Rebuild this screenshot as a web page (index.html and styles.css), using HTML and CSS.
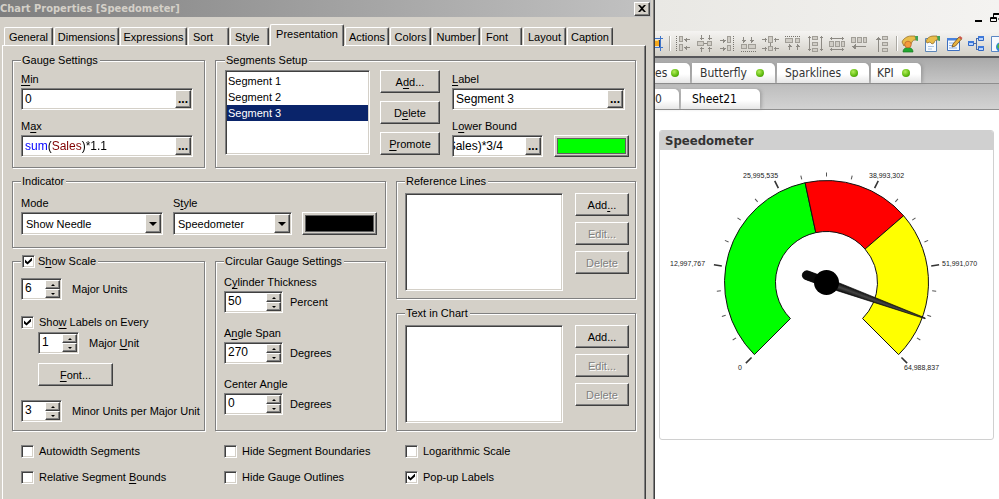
FILE: index.html
```html
<!DOCTYPE html>
<html lang="en">
<head>
<meta charset="utf-8">
<title>Chart Properties [Speedometer]</title>
<link rel="stylesheet" href="styles.css">
</head>
<body>
<div class="desktop">
<section class="dialog" aria-labelledby="dlg-title">
  <header class="titlebar">
    <h1 id="dlg-title">Chart Properties [Speedometer]</h1>
    <button class="close" aria-label="Close"><svg width="8" height="7" viewBox="0 0 8 7"><path d="M0 0h2l2 2 2-2h2L5 3.500 8 7H6L4 5 2 7H0l3-3.500z"/></svg></button>
  </header>
  <nav class="tabs" role="tablist">
    <button role="tab">General</button>
    <button role="tab">Dimensions</button>
    <button role="tab">Expressions</button>
    <button role="tab" class="left">Sort</button>
    <button role="tab" class="left">Style</button>
    <button role="tab" class="active" aria-selected="true">Presentation</button>
    <button role="tab">Actions</button>
    <button role="tab">Colors</button>
    <button role="tab">Number</button>
    <button role="tab" class="left">Font</button>
    <button role="tab">Layout</button>
    <button role="tab">Caption</button>
  </nav>
  <div class="page" role="tabpanel">
    <div class="top-row">
      <fieldset class="gauge">
        <legend>Gauge Settings</legend>
        <div class="field"><label for="min"><u>M</u>in</label>
          <div class="box"><input id="min" value="0"><button class="more" aria-label="Edit minimum">...</button></div></div>
        <div class="field"><label for="max">M<u>a</u>x</label>
          <div class="box"><input id="max" class="expr" value="sum(Sales)*1.1"><button class="more" aria-label="Edit maximum">...</button></div></div>
      </fieldset>
      <fieldset class="segments">
        <legend>Segments Setup</legend>
        <select class="list" size="5" aria-label="Segments">
          <option>Segment 1</option><option>Segment 2</option><option selected>Segment 3</option>
        </select>
        <div class="stack wide-gap">
          <button class="btn">A<u>d</u>d...</button>
          <button class="btn">D<u>e</u>lete</button>
          <button class="btn"><u>P</u>romote</button>
        </div>
        <div class="segment-fields">
          <div class="field"><label for="seg"><u>L</u>abel</label>
            <div class="box label-box"><input id="seg" value="Segment 3"><button class="more" aria-label="Edit label">...</button></div></div>
          <div class="field"><label for="bound">L<u>o</u>wer Bound</label>
            <div class="bound-row">
              <div class="box"><input id="bound" class="scrolled" value="sum(Sales)*3/4"><button class="more" aria-label="Edit bound">...</button></div>
              <button class="swatch" aria-label="Segment color"><span class="lime"></span></button>
            </div></div>
        </div>
      </fieldset>
    </div>

    <div class="lower">
      <div class="lower-left">
        <fieldset class="indicator">
          <legend>Indicator</legend>
          <div class="field"><label for="mode">Mode</label>
            <div class="combo"><select id="mode"><option>Show Needle</option></select><span class="drop"></span></div></div>
          <div class="field"><label for="style">S<u>t</u>yle</label>
            <div class="combo"><select id="style"><option>Speedometer</option></select><span class="drop"></span></div></div>
          <button class="swatch" aria-label="Needle color"><span class="black"></span></button>
        </fieldset>
        <div class="pair">
          <fieldset class="scale">
            <legend class="check"><input type="checkbox" id="scale" checked><label for="scale">S<u>h</u>ow Scale</label></legend>
            <div class="unit"><div class="spin"><input id="major" value="6"><span class="arrows"><button aria-label="Up"></button><button class="down" aria-label="Down"></button></span></div><label for="major">Major Units</label></div>
            <div class="check labels-on"><input type="checkbox" id="every" checked><label for="every">Sho<u>w</u> Labels on Every</label></div>
            <div class="unit indent"><div class="spin"><input id="nth" value="1"><span class="arrows"><button aria-label="Up"></button><button class="down" aria-label="Down"></button></span></div><label for="nth">Major <u>U</u>nit</label></div>
            <button class="btn font indent"><u>F</u>ont...</button>
            <div class="unit"><div class="spin"><input id="minor" value="3"><span class="arrows"><button aria-label="Up"></button><button class="down" aria-label="Down"></button></span></div><label for="minor">Minor Units per Major Unit</label></div>
          </fieldset>
          <fieldset class="circular">
            <legend>Circular Gauge Settings</legend>
            <div class="field"><label for="thick">C<u>y</u>linder Thickness</label>
              <div class="unit"><div class="spin"><input id="thick" value="50"><span class="arrows"><button aria-label="Up"></button><button class="down" aria-label="Down"></button></span></div><span>Percent</span></div></div>
            <div class="field"><label for="span">A<u>n</u>gle Span</label>
              <div class="unit"><div class="spin"><input id="span" value="270"><span class="arrows"><button aria-label="Up"></button><button class="down" aria-label="Down"></button></span></div><span>Degrees</span></div></div>
            <div class="field"><label for="center">Center Angle</label>
              <div class="unit"><div class="spin"><input id="center" value="0"><span class="arrows"><button aria-label="Up"></button><button class="down" aria-label="Down"></button></span></div><span>Degrees</span></div></div>
          </fieldset>
        </div>
      </div>
      <div class="lower-right">
        <fieldset class="lines">
          <legend>Reference Lines</legend>
          <select class="list" size="6" aria-label="Reference lines"></select>
          <div class="stack"><button class="btn">Add<u>.</u>..</button><button class="btn" disabled>Edit...</button><button class="btn" disabled>Delete</button></div>
        </fieldset>
        <fieldset class="lines">
          <legend>Text in Chart</legend>
          <select class="list" size="6" aria-label="Texts in chart"></select>
          <div class="stack"><button class="btn">Add...</button><button class="btn" disabled>Edit...</button><button class="btn" disabled>Delete</button></div>
        </fieldset>
      </div>
    </div>

    <div class="options">
      <div class="check"><input type="checkbox" id="o1"><label for="o1">Autowidth Segments</label></div>
      <div class="check"><input type="checkbox" id="o2"><label for="o2">Hide Segment Boundaries</label></div>
      <div class="check"><input type="checkbox" id="o3"><label for="o3">Logarithmic Scale</label></div>
      <div class="check"><input type="checkbox" id="o4"><label for="o4">Relative Segment <u>B</u>ounds</label></div>
      <div class="check"><input type="checkbox" id="o5"><label for="o5">Hide Gauge Outlines</label></div>
      <div class="check"><input type="checkbox" id="o6" checked><label for="o6">Pop-up Labels</label></div>
    </div>
  </div>
</section>

<main class="app">
  <div class="window-bar">
    <button aria-label="Minimize"><svg width="7" height="10" viewBox="0 0 7 10"><path d="M0 7h7v2H0z"/></svg></button>
    <button aria-label="Restore"><svg width="10" height="10" viewBox="0 0 10 10" fill="none" stroke="#000"><path d="M3.500 4V.500h7V6H8M3 1.500h8M.500 4.500h6v4h-6zM0 5.500h7"/></svg></button>
  </div>
  <div class="toolbar">
    <svg width="8" height="18" viewBox="0 0 8 18" shape-rendering="crispEdges"><path d="M0 5h4v6H0z" fill="#f5a81c"/><path d="M0 5h3v1H0z" fill="#fbe08a"/><path d="M5 1v15M0 3.500h8M0 12.500h8" stroke="#3f74c8" fill="none"/><path d="M4 5v7" stroke="#223a70"/></svg>
    <span class="sep"></span>
    <svg class="al" viewBox="0 0 18 18"><path class="dots" d="M2.500 1v16"/><path class="b" d="M5.500 1.500h3v5h-3zM5.500 9.500h3v6h-3z"/><path class="a" d="M10 4.500h6M12.500 2.500v4M11.500 3.500v2M10 12.500h6M12.500 10.500v4M11.500 11.500v2"/></svg>
    <svg class="al" viewBox="0 0 18 18"><path class="b" d="M1.500 6.500h6v4h-6zM11.500 6.500h4v4h-4z"/><path class="a" d="M5.500 0v5M3.500 3.500h4M13.500 0v5M11.500 3.500h4M5.500 12v5M3.500 13.500h4M13.500 12v5M11.500 13.500h4M8 8.500h3"/></svg>
    <svg class="al" viewBox="0 0 18 18"><path class="dots" d="M15.500 1v16"/><path class="b" d="M9.500 1.500h3v6h-3zM9.500 10.500h3v5h-3z"/><path class="a" d="M2 5.500h6M5.500 3.500v4M6.500 4.500v2M2 13.500h6M5.500 11.500v4M6.500 12.500v2"/></svg>
    <svg class="al" viewBox="0 0 18 18"><path class="dots" d="M1 16.500h16"/><path class="b" d="M1.500 9.500h5v4h-5zM8.500 9.500h7v4h-7z"/><path class="a" d="M3.500 2v6M1.500 5.500h4M2.500 6.500h2M11.500 2v6M9.500 5.500h4M10.500 6.500h2"/></svg>
    <svg class="al" viewBox="0 0 18 18"><path class="b" d="M6.500 1.500h4v6h-4zM6.500 11.500h4v4h-4z"/><path class="a" d="M0 4.500h5M3.500 2.500v4M12 4.500h5M13.500 2.500v4M0 13.500h5M3.500 11.500v4M12 13.500h5M13.500 11.500v4M8.500 8v3"/></svg>
    <svg class="al" viewBox="0 0 18 18"><path class="dots" d="M1 1.500h16"/><path class="b" d="M1.500 3.500h7v4h-7zM11.500 3.500h4v4h-4z"/><path class="a" d="M5.500 9v6M3.500 11.500h4M4.500 10.500h2M13.500 9v6M11.500 11.500h4M12.500 10.500h2"/></svg>
    <svg class="al" viewBox="0 0 18 18"><path class="b" d="M6.500 1.500h5v3h-5zM6.500 7.500h5v3h-5zM6.500 13.500h5v3h-5z"/><path class="a" d="M3.500 1v15M2 2.500h3M2 14.500h3M15.500 1v15M14 2.500h3M14 14.500h3"/></svg>
    <svg class="al" viewBox="0 0 18 18"><path class="b" d="M1.500 6.500h4v5h-4zM7.500 6.500h4v5h-4zM13.500 6.500h3v5h-3z"/><path class="a" d="M2 3.500h14M3.500 2v3M14.500 2v3M2 14.500h14M3.500 13v3M14.500 13v3"/></svg>
    <svg class="al" viewBox="0 0 18 18"><path class="b" d="M1.500 2.500h4v5h-4zM7.500 2.500h4v5h-4zM13.500 2.500h3v5h-3z"/><path class="a" d="M2 11.500h14M4.500 9.500v4M3.500 10.500v2M5.500 9v5"/></svg>
    <svg class="al" viewBox="0 0 18 18"><path class="b" d="M10.500 1.500h5v3h-5zM10.500 7.500h5v3h-5zM10.500 13.500h5v3h-5z"/><path class="a" d="M6.500 2v15M4 4.500h5M5 3.500h3"/></svg>
    <span class="sep"></span>
    <svg class="ic" viewBox="0 0 18 18"><path d="M2 17c0-3 2-4.500 5-4.500s5 1.500 5 4.500z" fill="#22a830" stroke="#157a20" stroke-width=".7"/><path d="M1 7c1-3 5-6 9-6h4l1 4c-2 0-3 0-4 2l-1 2-2-2-3 1-2 3z" fill="#e9bd4a" stroke="#8b6420" stroke-width=".7"/><circle cx="7" cy="9.500" r="3.300" fill="#f49a3c" stroke="#b8602a" stroke-width=".7"/><path d="M14 1h3v5l-2-.5z" fill="#3fa356"/></svg>
    <svg class="ic" viewBox="0 0 18 18"><path d="M2.500 3.500h11v13h-11z" fill="#f7fbff" stroke="#5c86b8"/><path d="M5 11.500h6M5 14h4" stroke="#a9c4e4"/><path d="M3 6c1-3 4-5 7-5h4l1 4c-2 0-3 0-4 3l-2 1-2-2-3 1z" fill="#e9bd4a" stroke="#8b6420" stroke-width=".7"/><path d="M14 1h3v5l-2-.5z" fill="#3fa356"/></svg>
    <svg class="ic" viewBox="0 0 18 18"><path d="M2.500 3.500h12v12h-12z" fill="#f4f9ff" stroke="#3d6fc0"/><path d="M2 3h13v2.500H2z" fill="#4a82dc"/><path d="M4 8h5M4 10.500h4M4 13h8" stroke="#8db2e6"/><path d="M7 12l1-3 6-7 2.500 2-6 7z" fill="#e6b23e" stroke="#6f4a1c" stroke-width=".8"/><path d="M13.500 2.500L15 1l2.500 2-1.200 1.500z" fill="#cc5548"/></svg>
    <svg class="ic" viewBox="0 0 18 18"><path d="M6 8.500h3M9.500 3.500v11M9 3.500h2M9 14.500h2" stroke="#4a6ca8" fill="none"/><path d="M1.500 6.500h5v4h-5zM11.500 1.500h5v4h-5zM11.500 11.500h5v4h-5z" fill="#b8d4ff" stroke="#3268c4"/><path d="M1 6h6v2H1zM11 1h6v2h-6zM11 11h6v2h-6z" fill="#3f79da"/></svg>
    <svg class="ic" viewBox="0 0 18 18"><path d="M2.500 1.500h8l4 4v11h-12z" fill="#f6faff" stroke="#5a86c4"/><circle cx="12" cy="12" r="5" fill="#2f86d8"/><path d="M9 9l3-1 1 3-3 3-2-2z" fill="#4bb64b"/></svg>
  </div>
  <nav class="sheets">
    <a href="#a" class="cut">es<i></i></a><a href="#b" class="s83">Butterfly<i></i></a><a href="#c" class="s92">Sparklines<i></i></a><a href="#d" class="s50">KPI<i></i></a>
  </nav>
  <nav class="sheets second">
    <a href="#e" class="cut0">0</a><a href="#f" class="s79">Sheet21</a>
  </nav>
  <section class="panel">
    <h2>Speedometer</h2>
    <svg class="dial" viewBox="660 150 333 289" role="img" aria-label="Speedometer gauge">
      <defs><linearGradient id="nd" x1="0" y1="0" x2="0" y2="1"><stop offset="0" stop-color="#000"/><stop offset=".5" stop-color="#444"/><stop offset="1" stop-color="#000"/></linearGradient></defs>
      <g transform="translate(826.500 282.500)">
        <g stroke="#111" stroke-width="1">
          <path fill="#0f0" d="M-72.120 72.120A102 102 0 0 1 -21.380 -99.740L-10.690 -49.870A51 51 0 0 0 -36.060 36.060Z"/>
          <path fill="#f00" d="M-21.380 -99.740A102 102 0 0 1 77.100 -66.780L38.550 -33.390A51 51 0 0 0 -10.690 -49.870Z"/>
          <path fill="#ff0" d="M77.100 -66.780A102 102 0 0 1 72.120 72.120L36.060 36.060A51 51 0 0 0 38.550 -33.390Z"/>
        </g>
        <g stroke="#333" stroke-width="1.600">
          <path d="M0-106v-8" transform="rotate(-135)"/><path d="M0-106v-8" transform="rotate(-81)"/><path d="M0-106v-8" transform="rotate(-27)"/><path d="M0-106v-8" transform="rotate(27)"/><path d="M0-106v-8" transform="rotate(81)"/><path d="M0-106v-8" transform="rotate(135)"/>
        </g>
        <g stroke="#555" stroke-width="1">
          <path d="M0-106v-4" transform="rotate(-121.500)"/><path d="M0-106v-4" transform="rotate(-108)"/><path d="M0-106v-4" transform="rotate(-94.500)"/><path d="M0-106v-4" transform="rotate(-67.500)"/><path d="M0-106v-4" transform="rotate(-54)"/><path d="M0-106v-4" transform="rotate(-40.500)"/><path d="M0-106v-4" transform="rotate(-13.500)"/><path d="M0-106v-4"/><path d="M0-106v-4" transform="rotate(13.500)"/><path d="M0-106v-4" transform="rotate(40.500)"/><path d="M0-106v-4" transform="rotate(54)"/><path d="M0-106v-4" transform="rotate(67.500)"/><path d="M0-106v-4" transform="rotate(94.500)"/><path d="M0-106v-4" transform="rotate(108)"/><path d="M0-106v-4" transform="rotate(121.500)"/>
        </g>
        <g transform="rotate(20.300)">
          <path fill="url(#nd)" stroke="#000" stroke-width=".6" d="M-21-4.500A4.500 4.500 0 0 0-21 4.500L0 4.500 12 4 105-.2V-1L12-4 0-4.500Z"/>
          <path fill="#0a0a0a" d="M-21-4.500A4.500 4.500 0 0 0-21 4.500L0 4V-4Z"/>
        </g>
        <circle r="12.500"/>
      </g>
      <g class="nums">
        <text x="743" y="178">25,995,535</text><text x="869" y="178">38,993,302</text>
        <text x="670" y="266">12,997,767</text><text x="942" y="266">51,991,070</text>
        <text x="738" y="370">0</text><text x="904" y="370">64,988,837</text>
      </g>
    </svg>
  </section>
</main>
</div>
</body>
</html>
```
FILE: styles.css
```css
* { box-sizing: border-box; }
body { margin: 0; background: #fff; font: 11px/16px "Liberation Sans", Arial, sans-serif; color: #000; }
button, input, select { font: inherit; color: inherit; margin: 0; }
button { cursor: default; }
label { white-space: nowrap; }
u { text-underline-offset: 2px; }

.desktop { display: grid; grid-template-columns: minmax(0, 655fr) minmax(0, 344fr); min-height: 100vh; overflow: hidden; }

/* dialog frame */
.dialog { background: #d4d0c8; border-right: 1px solid #404040; box-shadow: inset -1px 0 #808080; display: flex; flex-direction: column; }
.titlebar { display: flex; justify-content: space-between; align-items: center; height: 17px; padding-right: 1px; background: linear-gradient(90deg, #7f7f7f, #c2c2c2); margin-right: 3px; }
.titlebar h1 { margin: 0; font: bold 11px/16px "DejaVu Sans Condensed", "DejaVu Sans", sans-serif; color: #d4d0c8; }
.close { width: 16px; height: 14px; padding: 0; display: grid; place-items: center; }

.btn, .close, .more, .drop, .arrows button {
  background: #d4d0c8; border: 1px solid; border-color: #fff #404040 #404040 #fff;
  box-shadow: inset -1px -1px #808080; border-radius: 0;
}
.btn { height: 23px; padding: 0; text-align: center; }
.btn:disabled { color: #808080; text-shadow: 1px 1px #fff; }

/* tab strip */
.tabs { display: grid; grid-template-columns: 49fr 65fr 67fr 41fr 39fr 74fr 44fr 41fr 48fr 41fr 43fr 46fr; column-gap: 1px; align-items: end; margin: 7px 41px 0 4px; height: 21px; position: relative; }
.tabs button { height: 18px; padding: 0 1px; background: #d4d0c8; border: 1px solid; border-color: #fff #404040 transparent #fff; border-bottom: 0; border-radius: 2px 2px 0 0; box-shadow: inset -1px 0 #808080; white-space: nowrap; }
.tabs .left { text-align: left; padding-left: 4px; }
.tabs .active { height: 22px; margin-bottom: -1px; padding-bottom: 4px; }

.page { flex: 1; margin: 0 8px 0 2px; padding: 7px 9px 14px; border: solid; border-width: 1px 1px 0; border-color: #fff #404040 #fff #fff; box-shadow: inset -1px 0 #808080; }

/* group boxes */
fieldset { margin: 0; min-width: 0; border: 1px solid #808080; box-shadow: 1px 1px #fff, inset 1px 1px #fff; padding: 4px 11px 10px 8px; }
legend { height: 14px; line-height: 14px; padding: 0 2px 0 1px; background: #d4d0c8; }
.top-row { display: grid; grid-template-columns: 193fr 421fr; gap: 10px; }
.lower { display: grid; grid-template-columns: 374fr 240fr; gap: 10px; margin-top: 6px; }
.lower-left, .lower-right { display: flex; flex-direction: column; }
.lower-left { gap: 6px; }
.lower-right { gap: 7px; }
.pair { display: grid; grid-template-columns: 193fr 171fr; gap: 10px; flex: 1; }

.field { display: flex; flex-direction: column; gap: 1px; min-width: 0; }
.field + .field { margin-top: 8px; }

/* sunken boxes */
.box, .spin, .list, .combo { background: #fff; border: 1px solid; border-color: #808080 #fff #fff #808080; box-shadow: inset 1px 1px #404040, inset -1px -1px #d4d0c8; border-radius: 0; }
.box { display: flex; height: 22px; padding: 1px; font: 12px/18px "Liberation Sans", Arial, sans-serif; min-width: 0; }
.box input { flex: 1; width: 0; min-width: 0; border: 0; outline: 0; padding: 0 0 1px 2px; background: transparent; }
.box .expr { color: transparent; background: linear-gradient(90deg, #00f 25px, #000 25px, #000 29px, #800000 29px, #800000 59px, #000 59px); -webkit-background-clip: text; background-clip: text; }
.box .scrolled { text-indent: -33px; padding-left: 0; }
.more { width: 16px; padding: 0; font-weight: bold; line-height: 12px; }
.label-box { margin-right: 4px; }

.segments { display: grid; grid-template-columns: 145fr 60fr 179fr; column-gap: 10px; padding: 3px 6px 10px 9px; }
.segment-fields { padding: 1px 0 0 2px; }
.list { appearance: none; display: block; width: 100%; height: 85px; padding: 2px 1px 1px; margin: 0; overflow: hidden; outline: 0; }
.list option { padding: 2px 1px 0; min-height: 16px; line-height: 14px; }
.list option:checked { background: linear-gradient(#0a246a, #0a246a); -webkit-text-fill-color: #fff; }
.stack { display: flex; flex-direction: column; gap: 6px; }
.wide-gap { gap: 8px; }
.bound-row { display: grid; grid-template-columns: 91fr 75fr; gap: 11px; }

.swatch { padding: 2px; background: #d4d0c8; border: 1px solid; border-color: #fff #404040 #404040 #fff; box-shadow: inset -1px -1px #808080; display: flex; height: 23px; }
.bound-row .swatch { height: 22px; }
.swatch span { flex: 1; align-self: stretch; border: 1px solid #606060; }
.lime { background: #0f0; }
.black { background: #000; }

/* indicator */
.indicator { display: grid; grid-template-columns: 142fr 119fr 75fr; gap: 10px; align-items: end; padding: 7px 8px 12px; }
.indicator .field + .field { margin-top: 0; }
.combo { display: grid; grid-template-columns: 1fr 16px; height: 23px; padding: 1px; }
.combo select { appearance: none; grid-area: 1 / 1 / 2 / 3; border: 0; background: none; padding: 0 3px; outline: 0; }
.drop { grid-area: 1 / 2; pointer-events: none; display: grid; place-items: center; }
.drop::after { content: ""; border: solid transparent; border-width: 4px 4px 0; border-top-color: #000; }

/* spinners */
.unit { display: flex; align-items: center; gap: 11px; }
.spin { display: flex; flex: none; width: 41px; height: 22px; padding: 1px; font-size: 12px; }
.spin input { flex: 1; width: 0; min-width: 0; border: 0; background: none; padding: 0 0 2px 2px; outline: 0; }
.arrows { width: 15px; display: grid; grid-template-rows: 1fr 1fr; }
.arrows button { padding: 0; display: grid; place-items: center; }
.arrows button::after { content: ""; border: solid transparent; border-width: 0 2px 2px; border-bottom-color: #000; }
.arrows .down::after { border-width: 2px 2px 0; border-color: #000 transparent; }

.scale { padding: 10px 4px 8px 8px; }
.scale .unit { gap: 10px; }
.indent { margin-left: 17px; }
.labels-on { margin: 14px 0 2px; }
.font { display: block; width: 75px; margin-top: 9px; margin-bottom: 14px; }
.circular { padding: 6px 6px 14px 8px; }
.circular .field + .field { margin-top: 12px; }
.circular .spin { width: 59px; }
.circular .unit { gap: 7px; }
.lines { display: grid; grid-template-columns: 158fr 54fr; gap: 12px; padding: 5px 6px 7px 8px; flex: 1; }
.lines .list { height: 98px; }

/* check boxes */
.check { display: flex; align-items: center; gap: 5px; height: 16px; }
legend.check { height: 14px; gap: 3px; }
.check input { appearance: none; flex: none; width: 13px; height: 13px; background: #fff; border: 1px solid; border-color: #808080 #fff #fff #808080; box-shadow: inset 1px 1px #404040, inset -1px -1px #d4d0c8; display: grid; place-items: center; }
.check input:checked::after { content: ""; width: 7px; height: 7px; background: #000; clip-path: polygon(0 29%, 36% 65%, 100% 0, 100% 43%, 36% 100%, 0 70%); }
.options { display: grid; grid-template-columns: 203fr 181fr 231fr; row-gap: 10px; padding-left: 9px; margin-top: 12px; }

/* application behind */
.app { min-width: 0; background: #fff; overflow: hidden; }
.window-bar { height: 31px; display: flex; justify-content: flex-end; align-items: center; gap: 8px; padding: 5px 0 0; background: linear-gradient(90deg, #e9e8e4, #f4f3f1); }
.window-bar button { border: 0; background: none; padding: 0; display: flex; }
.window-bar button:last-child { margin-right: -1px; }
.toolbar { height: 27px; display: flex; align-items: center; gap: 4px; border-bottom: 2px solid #56565a; background: linear-gradient(#f5f4f2, #d3d0c8); overflow: hidden; }
.toolbar svg { flex: none; }
.sep { flex: none; width: 2px; height: 15px; margin: 0 -1px 0 2px; background: #aaa8a2; border-right: 1px solid #fff; }
.al, .ic { width: 18px; height: 18px; }
.al { shape-rendering: crispEdges; fill: none; stroke: #8d8a84; }
.al .b { fill: #d0cdc6; stroke: #a19e97; }
.al .dots { stroke-dasharray: 1 1; stroke: #77746e; }

.sheets { height: 26px; display: flex; align-items: flex-end; gap: 2px; background: linear-gradient(#a9a9a9, #c6c6c6); border-bottom: 1px solid #8e8e8e; font: 12px/18px "DejaVu Sans Condensed", "Noto Sans", sans-serif; }
.sheets.second { background: linear-gradient(#bdbdbd, #d2d2d2); }
.sheets a { flex: none; height: 20px; display: flex; align-items: center; justify-content: space-between; padding: 0 11px 0 8px; color: #333; text-decoration: none; background: linear-gradient(#fff 55%, #e6e6e6); border-radius: 0 5px 0 0; box-shadow: 2px 0 3px #8888; }
.sheets i { width: 8px; height: 8px; border-radius: 50%; background: radial-gradient(circle at 40% 35%, #b4ee5a, #5bb80c 60%, #3d7d10); }
.sheets .cut { width: 35px; padding-left: 0; }
.sheets .cut0 { width: 24px; padding-left: 0; }
.sheets .s83 { width: 83px; }
.sheets .s92 { width: 92px; }
.sheets .s50 { width: 50px; padding-left: 6px; }
.sheets .s79 { width: 79px; padding-left: 11px; color: #000; }

.panel { margin: 20px 5px 0 4px; border: 1px solid #d0d0d0; border-radius: 3px; overflow: hidden; }
.panel h2 { margin: 0; padding: 0 5px; background: #d0d0d0; color: #333; font: bold 13px/19px "DejaVu Sans Condensed", "DejaVu Sans", sans-serif; }
.dial { display: block; width: 100%; height: auto; }
.nums { font: 7px "Liberation Sans", Arial, sans-serif; fill: #222; }
```
